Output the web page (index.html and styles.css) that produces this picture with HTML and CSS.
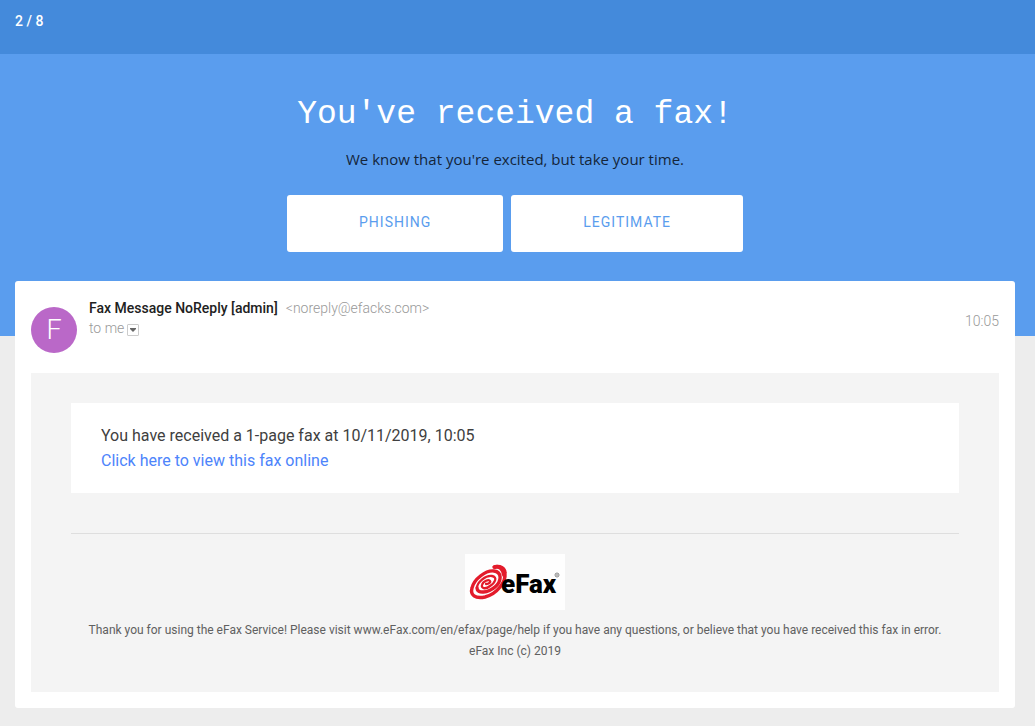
FILE: index.html
```html
<!DOCTYPE html>
<html lang="en">
<head>
<meta charset="utf-8">
<meta name="viewport" content="width=device-width, initial-scale=1">
<title>You've received a fax!</title>
<link rel="stylesheet" href="styles.css">
</head>
<body>
<header class="progress">2 / 8</header>
<section class="hero">
  <h1 class="title">You've received a fax!</h1>
  <p class="subtitle">We know that you're excited, but take your time.</p>
  <div class="choices">
    <button class="choice" type="button">PHISHING</button>
    <button class="choice" type="button">LEGITIMATE</button>
  </div>
</section>
<main class="email">
  <div class="meta">
    <div class="avatar">F</div>
    <div class="sender">
      <div><strong class="name">Fax Message NoReply [admin]</strong><span class="address">&lt;noreply@efacks.com&gt;</span></div>
      <div class="recipient">to me<button class="details" type="button" aria-label="Show details"><svg width="6" height="4" viewBox="0 0 6 4"><path d="M0 0h6v1L3 4 0 1z" fill="#666"/></svg></button></div>
    </div>
    <time class="time">10:05</time>
  </div>
  <div class="content">
    <div class="message">
      <p>You have received a 1-page fax at 10/11/2019, 10:05</p>
      <a class="link" href="#">Click here to view this fax online</a>
    </div>
    <footer class="footer">
      <svg class="logo" width="100" height="56" viewBox="0 0 100 56" role="img" aria-label="eFax">
        <rect width="100" height="56" fill="#fefefe"/>
        <g fill="none" stroke="#e31b2b" stroke-linecap="round" stroke-linejoin="round">
          <path d="M29 13C35 11 40 14 40 19C41 28 32 40 20 43C10 45 5 41 7 34C9 25 21 16 29 17C37 18 37 27 30 33C23 39 12 40 12 34" stroke-width="3.4"/>
          <path d="M12 34C12 28 21 21 27 22C33 23 30 29 25 32C20 36 16 34 17 31C18 27 24 25 25 27C26 28 24 30 21 30" stroke-width="2.3"/>
          <path d="M30 13C35 12 38 15 39 21" stroke-width="4"/>
        </g>
        <text class="wordmark" x="36" y="39">eFax</text>
        <circle cx="92" cy="21" r="2" fill="none" stroke="#888" stroke-width="1"/>
        <path d="M92 20v2" stroke="#777"/>
      </svg>
      <p>Thank you for using the eFax Service! Please visit www.eFax.com/en/efax/page/help if you have any questions, or believe that you have received this fax in error.</p>
      <p>eFax Inc (c) 2019</p>
    </footer>
  </div>
</main>
</body>
</html>
```
FILE: styles.css
```css
* {
  box-sizing: border-box;
}

body {
  margin: 0;
  background: #ededed;
  color: #212121;
  font-family: Roboto, "Liberation Sans", sans-serif;
  font-size: 14px;
}

p {
  margin: 0;
}

.progress {
  height: 54px;
  padding: 13px 15px;
  background: #448adb;
  color: #fff;
  font-weight: 500;
  line-height: 16px;
}

.hero {
  padding: 39px 20px 84px 15px;
  background: #5a9dee;
  text-align: center;
}

.title {
  margin: 0;
  color: #fff;
  font-family: "Liberation Mono", monospace;
  font-size: 33px;
  font-weight: 400;
  line-height: 44px;
}

.subtitle {
  margin-top: 10px;
  color: #14253a;
  font-family: "Open Sans", sans-serif;
  font-size: 15px;
  line-height: 24px;
}

.choices {
  display: flex;
  justify-content: center;
  gap: 8px;
  margin-top: 24px;
}

.choice {
  height: 57px;
  padding: 0 72px 4px;
  border: 0;
  border-radius: 3px;
  background: #fff;
  color: #5a9dee;
  font: 400 14px/20px Roboto, sans-serif;
  letter-spacing: 1px;
}

.email {
  margin: -55px 20px 18px 15px;
  padding: 16px;
  border-radius: 3px;
  background: #fff;
}

.meta {
  display: flex;
  height: 76px;
}

.avatar {
  width: 46px;
  height: 46px;
  margin: 10px 12px 0 0;
  border-radius: 50%;
  background: #ba68c8;
  color: #fff;
  font-size: 27px;
  font-weight: 300;
  line-height: 46px;
  text-align: center;
}

.sender {
  flex: 1;
  padding-top: 1px;
  line-height: 20px;
}

.name {
  margin-right: 8px;
  font-weight: 500;
}

.address,
.recipient,
.time {
  color: #999;
  font-weight: 300;
}

.recipient {
  display: flex;
  align-items: center;
}

.details {
  display: flex;
  align-items: center;
  justify-content: center;
  width: 12px;
  height: 12px;
  margin: 4px 0 0 3px;
  padding: 0;
  border: 1px solid #ccc;
  border-radius: 1px;
  background: #fff;
}

.time {
  padding-top: 14px;
  line-height: 20px;
}

.content {
  padding: 30px 40px;
  background: #f4f4f4;
}

.message {
  padding: 20px 30px;
  background: #fff;
  color: #404040;
  font-size: 16px;
  line-height: 25px;
}

.link {
  color: #4d84fb;
  text-decoration: none;
}

.footer {
  margin-top: 40px;
  padding-top: 20px;
  border-top: 1px solid #dedede;
  color: #606060;
  font-size: 12px;
  line-height: 21px;
  text-align: center;
}

.logo {
  display: block;
  margin: 0 auto 10px;
}

.wordmark {
  font-family: Roboto, sans-serif;
  font-size: 26px;
  font-weight: 900;
  fill: #000;
}
```
